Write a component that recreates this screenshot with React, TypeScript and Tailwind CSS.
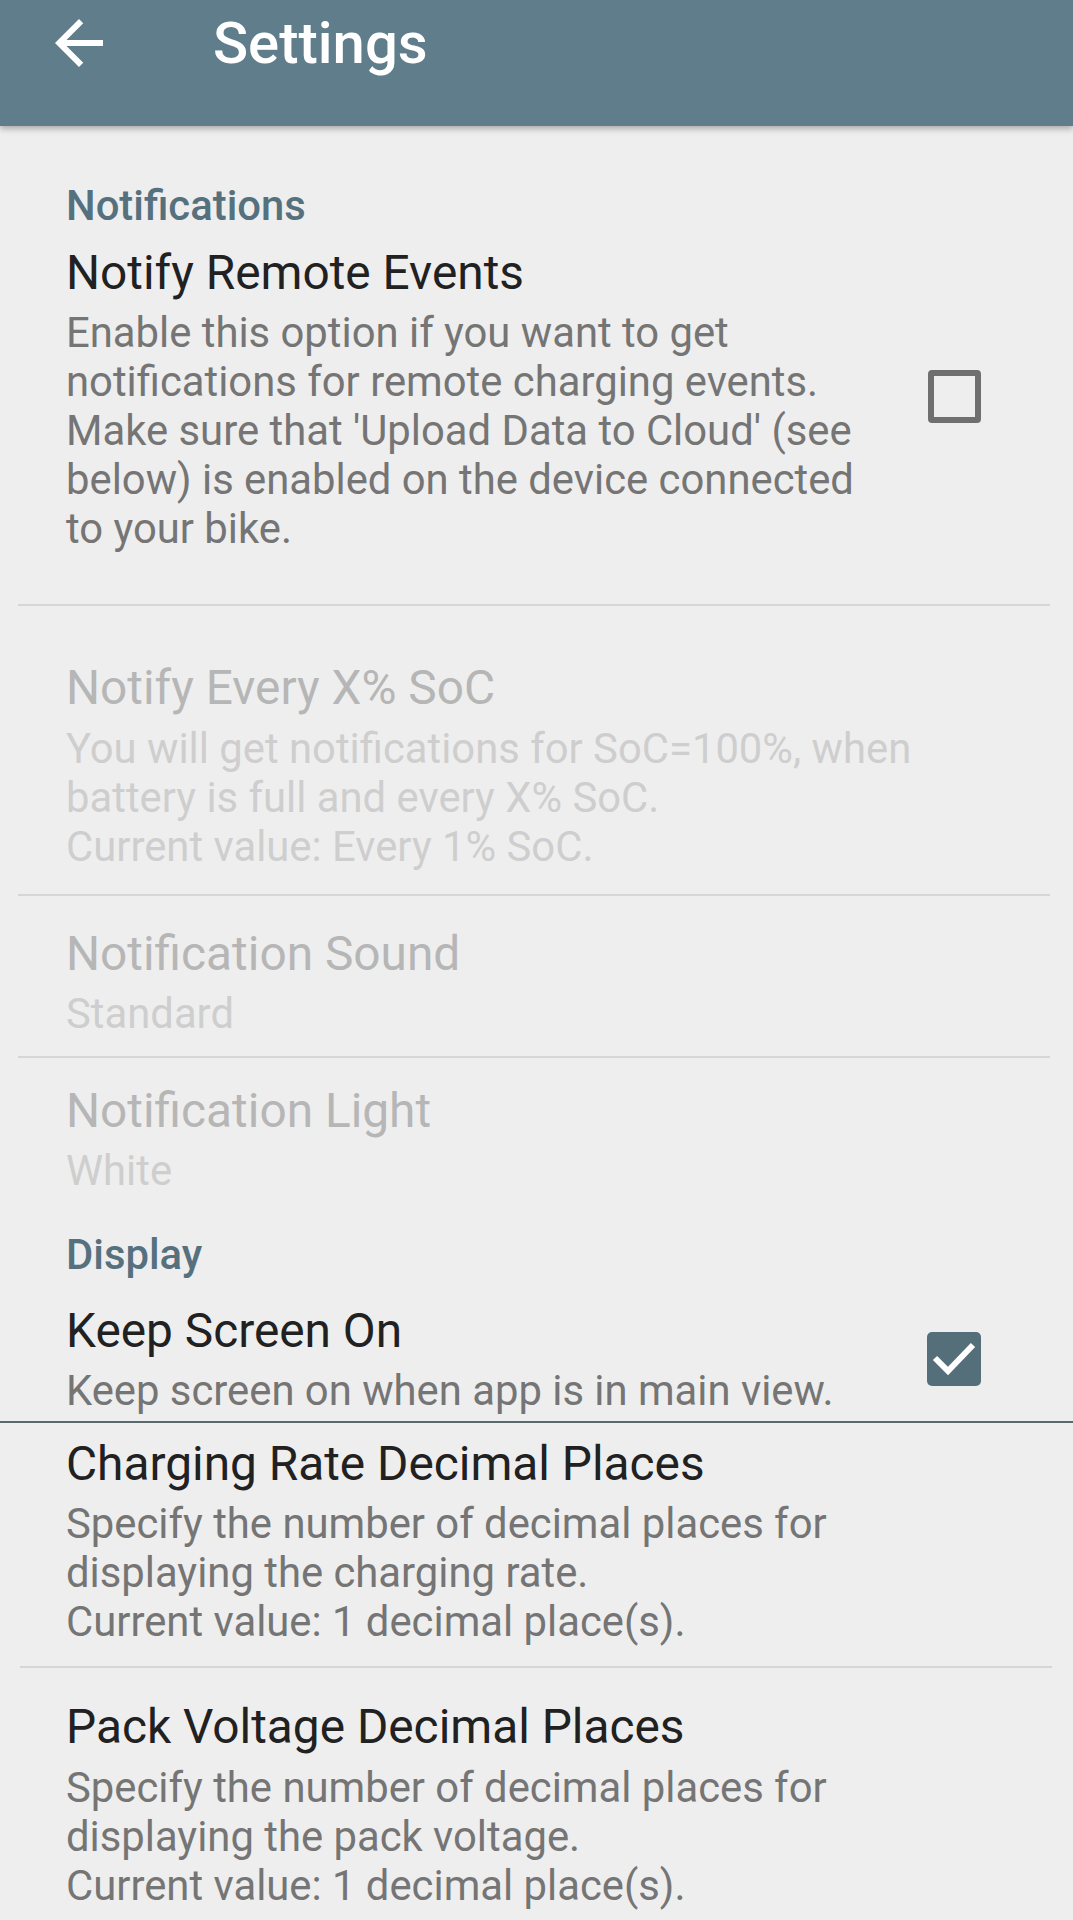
import React from "react";

function Checkbox({ checked }: { checked: boolean }) {
  if (checked) {
    return (
      <div className="w-[54px] h-[54px] rounded-[5px] bg-[#546e7a]">
        <svg width="54" height="54" viewBox="0 0 54 54">
          <path d="M8 26 L21 39 L46 13" fill="none" stroke="#ffffff" strokeWidth="6" />
        </svg>
      </div>
    );
  }
  return <div className="w-[53px] h-[53px] rounded-[4px] border-[6px] border-[#6f6f6f]" />;
}

function Divider() {
  return <div className="h-[2px] bg-[#d6d6d6] ml-[18px] mr-[23px]" />;
}

function Lines({ lines, className }: { lines: string[]; className: string }) {
  return (
    <div className={className}>
      {lines.map((l, i) => (
        <div key={i} className="whitespace-nowrap">
          {l}
        </div>
      ))}
    </div>
  );
}

export default function App() {
  const titleOn = "text-[47.8px] leading-[56px] text-[#212121] whitespace-nowrap";
  const titleOff = "text-[47.8px] leading-[56px] text-[#b6b6b6] whitespace-nowrap";
  const sumOn = "text-[41.8px] leading-[49px] text-[#757575]";
  const sumOff = "text-[41.8px] leading-[49px] text-[#cecece]";
  const section = "pl-[66px] text-[41.8px] leading-[49px] font-medium text-[#56717e]";

  return (
    <div className="w-full h-[1920px] overflow-hidden bg-[#eeeeee] font-[Roboto,sans-serif]">
      {/* Toolbar */}
      <div className="relative z-10 h-[126px] bg-[#607d8b] flex items-start shadow-[0_3px_6px_rgba(0,0,0,0.28)]">
        <svg className="ml-[43px] mt-[7px]" width="72" height="72" viewBox="0 0 24 24">
          <path d="M20 11H7.83l5.59-5.59L12 4l-8 8 8 8 1.41-1.41L7.83 13H20v-2z" fill="#ffffff" />
        </svg>
        <div className="ml-[98px] mt-[10px] text-[58px] leading-[66px] font-medium text-white">Settings</div>
      </div>

      {/* Notifications */}
      <div className={`pt-[55px] ${section}`}>Notifications</div>

      <div className="flex items-center pt-[15px] pb-[51px]">
        <div className="flex-1 pl-[66px]">
          <div className={titleOn}>Notify Remote Events</div>
          <Lines
            className={`mt-[7px] ${sumOn}`}
            lines={[
              "Enable this option if you want to get",
              "notifications for remote charging events.",
              "Make sure that 'Upload Data to Cloud' (see",
              "below) is enabled on the device connected",
              "to your bike.",
            ]}
          />
        </div>
        <div className="mr-[92px] mb-[5px]">
          <Checkbox checked={false} />
        </div>
      </div>
      <Divider />

      <div className="pl-[66px] pt-[54px] pb-[23px]">
        <div className={titleOff}>Notify Every X% SoC</div>
        <Lines
          className={`mt-[8px] ${sumOff}`}
          lines={[
            "You will get notifications for SoC=100%, when",
            "battery is full and every X% SoC.",
            "Current value: Every 1% SoC.",
          ]}
        />
      </div>
      <Divider />

      <div className="pl-[66px] pt-[30px] pb-[18px]">
        <div className={titleOff}>Notification Sound</div>
        <div className={`mt-[7px] ${sumOff}`}>Standard</div>
      </div>
      <Divider />

      <div className="pl-[66px] pt-[25px]">
        <div className={titleOff}>Notification Light</div>
        <div className={`mt-[7px] ${sumOff}`}>White</div>
      </div>

      {/* Display */}
      <div className={`pt-[35px] ${section}`}>Display</div>

      <div className="flex items-center pt-[24px] pb-[6px]">
        <div className="flex-1 pl-[66px]">
          <div className={titleOn}>Keep Screen On</div>
          <div className={`mt-[7px] whitespace-nowrap ${sumOn}`}>Keep screen on when app is in main view.</div>
        </div>
        <div className="mr-[92px]">
          <Checkbox checked={true} />
        </div>
      </div>
      <div className="h-[2px] bg-[#5a6870]" />

      <div className="pl-[66px] pt-[13px] pb-[20px]">
        <div className={titleOn}>Charging Rate Decimal Places</div>
        <Lines
          className={`mt-[7px] ${sumOn}`}
          lines={[
            "Specify the number of decimal places for",
            "displaying the charging rate.",
            "Current value: 1 decimal place(s).",
          ]}
        />
      </div>
      <div className="h-[2px] bg-[#d6d6d6] ml-[20px] mr-[21px]" />

      <div className="pl-[66px] pt-[31px]">
        <div className={titleOn}>Pack Voltage Decimal Places</div>
        <Lines
          className={`mt-[8px] ${sumOn}`}
          lines={[
            "Specify the number of decimal places for",
            "displaying the pack voltage.",
            "Current value: 1 decimal place(s).",
          ]}
        />
      </div>
    </div>
  );
}
